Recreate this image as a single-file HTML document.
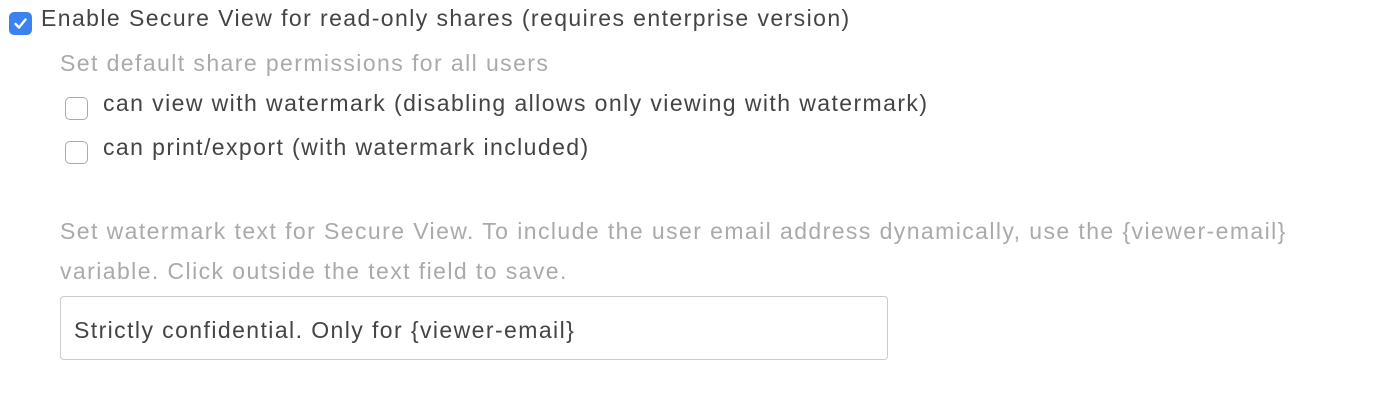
<!DOCTYPE html>
<html><head><style>
body{margin:0;width:1386px;height:400px;background:#fff;font-family:"Liberation Sans",sans-serif;position:relative;overflow:hidden}
.t{position:absolute;white-space:nowrap;font-size:23px;letter-spacing:1.42px}
.cb{position:absolute;width:21px;height:21px;border:1px solid #aaa;border-radius:5px;background:#fff;box-sizing:border-box}
</style></head><body>
<div class="cb" style="left:9px;top:12px;width:23px;height:23px;background:#3b82f0;border-color:#3b82f0">
<svg width="23" height="23" viewBox="0 0 23 23" style="position:absolute;left:-1px;top:-1px"><path d="M6.5 12 L10 15.5 L16.5 7.5" stroke="#fff" stroke-width="2.4" fill="none" stroke-linecap="round" stroke-linejoin="round"/></svg></div>
<div class="t" style="left:41px;top:5px;color:#444">Enable Secure View for read-only shares (requires enterprise version)</div>
<div class="t" style="left:60px;top:50px;color:#aaa">Set default share permissions for all users</div>
<div class="cb" style="left:65px;top:97px;width:23px;height:23px"></div>
<div class="t" style="left:103px;top:90px;color:#444">can view with watermark (disabling allows only viewing with watermark)</div>
<div class="cb" style="left:65px;top:141px;width:23px;height:23px"></div>
<div class="t" style="left:103px;top:134px;color:#444">can print/export (with watermark included)</div>
<div class="t" style="left:60px;top:218px;color:#aaa">Set watermark text for Secure View. To include the user email address dynamically, use the {viewer-email}</div>
<div class="t" style="left:60px;top:258px;color:#aaa">variable. Click outside the text field to save.</div>
<div style="position:absolute;left:60px;top:296px;width:828px;height:64px;border:1px solid #ccc;border-radius:4px;box-sizing:border-box"></div>
<div class="t" style="left:74px;top:317px;color:#444">Strictly confidential. Only for {viewer-email}</div>
</body></html>
